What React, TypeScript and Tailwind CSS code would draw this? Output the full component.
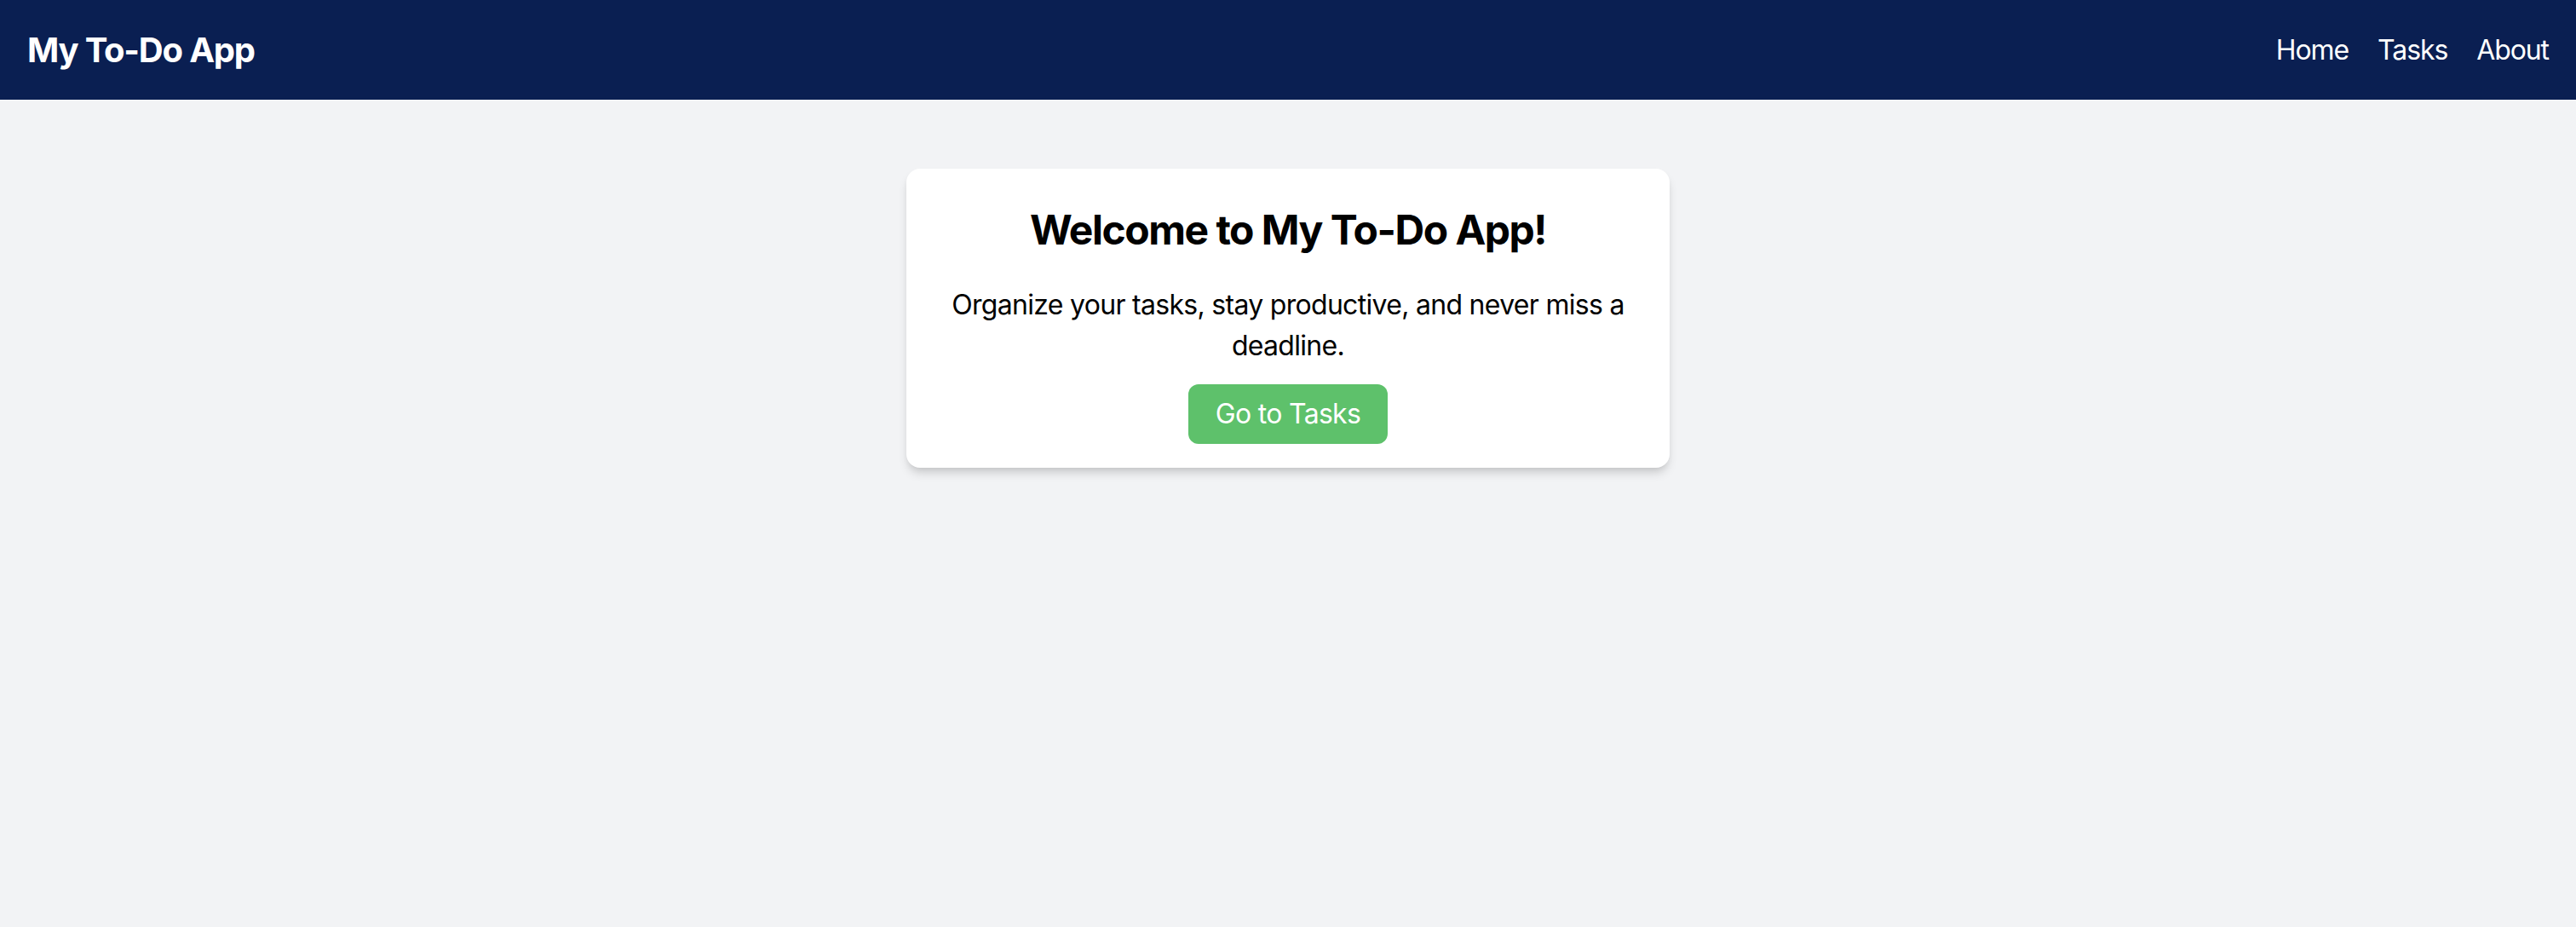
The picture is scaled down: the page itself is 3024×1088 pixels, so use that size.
export default function App() {
  return (
    <div className="min-h-screen bg-[#f2f3f5] font-['Inter',_sans-serif] text-black">
      {/* Header */}
      <header className="flex h-[117px] items-center justify-between bg-[#0a1f52] px-8 text-white">
        <h1 className="text-[40px] font-bold leading-none tracking-[-1.2px]">My To-Do App</h1>
        <nav className="flex gap-[34px] text-[32px] leading-none tracking-[-1.1px]">
          <a href="#">Home</a>
          <a href="#">Tasks</a>
          <a href="#">About</a>
        </nav>
      </header>

      {/* Welcome card */}
      <main className="flex justify-center pt-[81px]">
        <div className="w-[896px] rounded-2xl bg-white px-8 pt-[43px] pb-[28px] text-center shadow-[0_8px_12px_-2px_rgba(0,0,0,0.15),0_4px_8px_-4px_rgba(0,0,0,0.1)]">
          <h2 className="text-[48px] font-bold leading-[1.2] tracking-[-1.5px]">Welcome to My To-Do App!</h2>
          <p className="mt-[35px] text-[32px] leading-[48px] tracking-[-0.7px]">
            Organize your tasks, stay productive, and never miss a deadline.
          </p>
          <button className="mt-[21px] rounded-xl bg-[#5ec16b] px-8 py-4 text-[32px] leading-[38px] tracking-[-0.7px] text-white">
            Go to Tasks
          </button>
        </div>
      </main>
    </div>
  )
}
